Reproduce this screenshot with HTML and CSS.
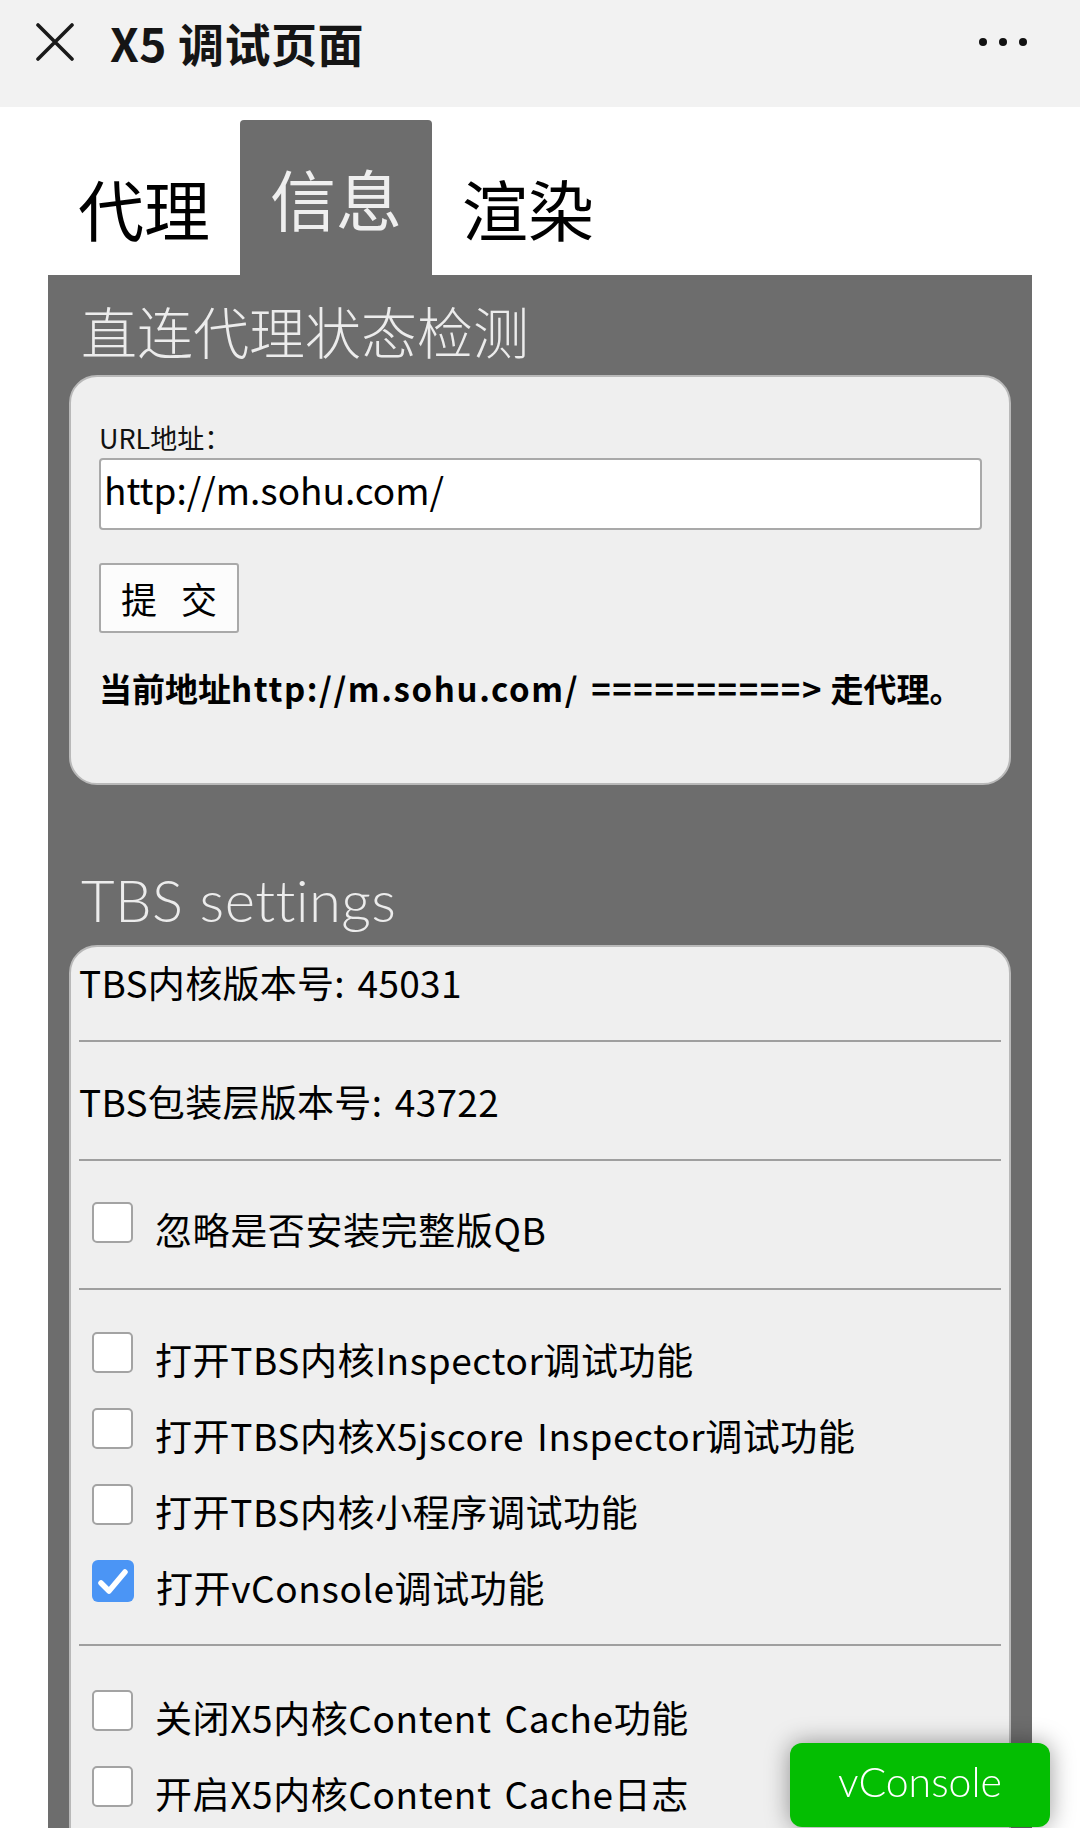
FILE: index.html
```html
<!DOCTYPE html>
<html lang="zh-CN">
<head>
<meta charset="utf-8">
<title>X5 调试页面</title>
<link rel="stylesheet" href="styles.css">
</head>
<body>
<header class="nav">
  <div class="nav-row">
    <svg class="close" width="38" height="38" viewBox="0 0 38 38" aria-hidden="true"><path d="M2 2 L36 36 M36 2 L2 36" stroke="#1a1a1a" stroke-width="3.6" stroke-linecap="round"/></svg>
    <h1 class="nav-title">X5 调试页面</h1>
    <div class="more"><i></i><i></i><i></i></div>
  </div>
</header>
<main class="page">
  <nav class="tabs">
    <span class="tab">代理</span>
    <span class="tab active">信息</span>
    <span class="tab">渲染</span>
  </nav>
  <section class="panel">
    <h2 class="panel-title first">直连代理状态检测</h2>
    <div class="card card-form">
      <div class="label">URL地址：</div>
      <input class="url" type="text" value="http://m.sohu.com/">
      <button class="submit" type="button">提 交</button>
      <p class="result">当前地址<span class="latin">http://m.sohu.com/ ==========&gt;</span> 走代理。</p>
    </div>
    <h2 class="panel-title tbs">TBS settings</h2>
    <div class="card card-list">
      <div class="info first">TBS内核版本号: 45031</div>
      <hr class="sep">
      <div class="info">TBS包装层版本号: 43722</div>
      <hr class="sep">
      <div class="group g1">
        <label class="check"><span class="cb"></span><span class="txt">忽略是否安装完整版QB</span></label>
      </div>
      <hr class="sep">
      <div class="group g2">
        <label class="check"><span class="cb"></span><span class="txt">打开TBS内核Inspector调试功能</span></label>
        <label class="check"><span class="cb"></span><span class="txt">打开TBS内核X5jscore Inspector调试功能</span></label>
        <label class="check"><span class="cb"></span><span class="txt">打开TBS内核小程序调试功能</span></label>
        <label class="check"><span class="cb on"><svg width="42" height="42" viewBox="0 0 42 42" aria-hidden="true"><path d="M9 23 L17 31 L33 12" fill="none" stroke="#fff" stroke-width="5.5" stroke-linecap="round" stroke-linejoin="round"/></svg></span><span class="txt">打开vConsole调试功能</span></label>
      </div>
      <hr class="sep">
      <div class="group g3">
        <label class="check"><span class="cb"></span><span class="txt">关闭X5内核Content Cache功能</span></label>
        <label class="check"><span class="cb"></span><span class="txt">开启X5内核Content Cache日志</span></label>
      </div>
    </div>
  </section>
</main>
<div class="vconsole">vConsole</div>
</body>
</html>
```

FILE: styles.css
```css
* { box-sizing: border-box; }
html, body {
  margin: 0;
  padding: 0;
}
body {
  width: 1080px;
  height: 1828px;
  overflow: hidden;
  background: #fff;
  font-family: "Noto Sans CJK SC", "Noto Sans", sans-serif;
  color: #000;
}

/* top navigation */
.nav {
  height: 107px;
  background: #f2f2f2;
}
.nav-row {
  height: 84px;
  display: flex;
  align-items: center;
  padding-left: 36px;
}
.close { flex-shrink: 0; margin-right: 36px; }
.nav-title {
  margin: 0;
  font-size: 46px;
  line-height: 60px;
  font-weight: 700;
  color: #151515;
  letter-spacing: 0.5px;
}
.more {
  margin-left: auto;
  margin-right: 53px;
  display: flex;
  gap: 12px;
}
.more i {
  display: block;
  width: 8px;
  height: 8px;
  border-radius: 50%;
  background: #111;
}

/* page */
.page {
  padding: 13px 48px 0;
}
.tabs {
  display: flex;
  align-items: flex-end;
  height: 155px;
}
.tab {
  font-size: 66px;
  line-height: 66px;
  padding: 0 30px 35px;
  color: #000;
}
.tab.active {
  background: #6d6d6d;
  color: #efefef;
  padding: 44px 30px 45px;
  border-radius: 4px 4px 0 0;
}

.panel {
  background: #6d6d6d;
  padding: 0 21px;
  height: 1600px;
}
.panel-title {
  margin: 0;
  color: #ececec;
  font-weight: 300;
  line-height: 70px;
  padding-left: 12px;
  white-space: nowrap;
}
.panel-title.first {
  font-size: 56px;
  padding-top: 20px;
  margin-bottom: 10px;
}
.panel-title.tbs {
  font-family: "Lato", "Noto Sans CJK SC", sans-serif;
  font-size: 58px;
  letter-spacing: 0.4px;
  margin-top: 80px;
  margin-bottom: 10px;
}

.card {
  background: #efefef;
  border: 2px solid #b9b9b9;
  border-radius: 28px;
}
.card-form {
  height: 410px;
  padding: 43px 27px 0 28px;
}
.label {
  font-size: 27px;
  line-height: 36px;
  color: #111;
}
.url {
  display: block;
  width: 100%;
  height: 72px;
  margin-top: 2px;
  border: 2px solid #a9a9a9;
  border-radius: 4px;
  background: #fff;
  font-family: inherit;
  font-size: 37px;
  color: #000;
  padding: 0 3px 10px;
  outline: none;
}
.submit {
  display: block;
  margin-top: 33px;
  width: 140px;
  height: 70px;
  border: 2px solid #a9a9a9;
  border-radius: 3px;
  background: #fcfcfc;
  font-family: inherit;
  font-size: 36px;
  letter-spacing: 8px;
  padding: 0 0 0 8px;
  color: #000;
}
.result {
  margin: 33px 0 0;
  font-size: 33px;
  line-height: 44px;
  font-weight: 700;
  white-space: nowrap;
  color: #000;
}
.result .latin {
  letter-spacing: 1.6px;
  word-spacing: 3px;
}

.card-list {
  padding: 0 8px;
  height: 1100px;
}
.info {
  font-size: 37px;
  line-height: 48px;
  padding: 35px 0 34px;
  white-space: nowrap;
  letter-spacing: 0.3px;
  word-spacing: 4px;
}
.info.first { padding-top: 11px; }
.sep {
  margin: 0;
  border: none;
  height: 2px;
  background: #9f9f9f;
}
.group {
  display: flex;
  flex-direction: column;
  gap: 28px;
}
.g1 { padding: 44px 0 35px; }
.g2 { padding: 45px 0 33px; }
.g3 { padding: 47px 0 0; }
.check {
  display: flex;
  align-items: flex-start;
  padding-left: 13px;
}
.cb {
  flex-shrink: 0;
  width: 41px;
  height: 41px;
  margin: -3px 22px 0 0;
  background: #fff;
  border: 2px solid #a3a3a3;
  border-radius: 5px;
}
.cb.on {
  background: #4b95f5;
  border: none;
  width: 42px;
  height: 42px;
  border-radius: 6px;
}
.cb.on svg { display: block; }
.txt {
  font-size: 37px;
  line-height: 48px;
  white-space: nowrap;
  letter-spacing: 0.6px;
  word-spacing: 4px;
}

/* floating vConsole switch */
.vconsole {
  position: fixed;
  left: 790px;
  top: 1743px;
  background: #04be02;
  color: #fff;
  border-radius: 12px;
  padding: 12px 48px 18px;
  font-family: "Lato", "Noto Sans", sans-serif;
  font-size: 41px;
  line-height: 54px;
  font-weight: 300;
  box-shadow: 0 0 24px rgba(0, 0, 0, 0.4);
}
```
